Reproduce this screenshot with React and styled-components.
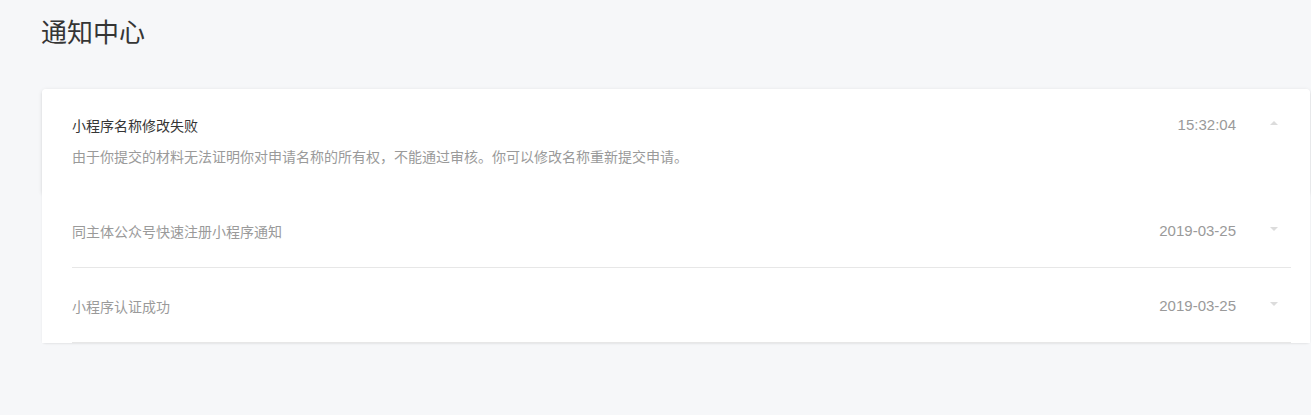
import React from "react";
import styled, { createGlobalStyle } from "styled-components";

const GlobalStyle = createGlobalStyle`
  html, body {
    margin: 0;
    padding: 0;
    background: #f6f7f9;
    font-family: "Noto Sans CJK SC", "Liberation Sans", sans-serif;
  }
`;

const Page = styled.div`
  padding: 12px 0 60px 41px;
  min-height: 415px;
  box-sizing: border-box;
  overflow: hidden;
`;

const Title = styled.h1`
  margin: 0;
  font-size: 26px;
  font-weight: 400;
  line-height: 38px;
  color: #353535;
`;

const Card = styled.div`
  margin: 39px 0 0 1px;
  width: 1268px;
  background: #ffffff;
  border-radius: 4px;
  box-shadow: 0 1px 2px rgba(0, 0, 0, 0.08);
`;

const Item = styled.div`
  position: relative;
  background: #ffffff;
  border-radius: ${({ $expanded }) => ($expanded ? "4px 4px 0 0" : "0")};
  box-shadow: ${({ $expanded }) =>
    $expanded ? "0 1px 4px rgba(0, 0, 0, 0.1)" : "none"};
`;

const Inner = styled.div`
  margin: 0 19px 0 30px;
  padding: ${({ $expanded }) => ($expanded ? "26px 13px 27px 0" : "28px 13px 26px 0")};
  border-bottom: ${({ $expanded }) => ($expanded ? "none" : "1px solid #e7e7e7")};
`;

const Head = styled.div`
  display: flex;
  align-items: center;
  height: 20px;
`;

const ItemTitle = styled.div`
  flex: 1;
  font-size: 14px;
  line-height: 20px;
  color: ${({ $expanded }) => ($expanded ? "#353535" : "#9a9a9a")};
`;

const Time = styled.div`
  font-size: 15px;
  line-height: 20px;
  color: #9a9a9a;
  font-family: "Liberation Sans", "Noto Sans CJK SC", sans-serif;
`;

const Arrow = styled.span`
  width: 0;
  height: 0;
  margin-left: 34px;
  border-left: 4px solid transparent;
  border-right: 4px solid transparent;
  ${({ $up }) =>
    $up
      ? "border-bottom: 4px solid #dcdcdc; margin-top: -4px;"
      : "border-top: 4px solid #dcdcdc; margin-top: -4px;"}
`;

const Desc = styled.div`
  margin-top: 11px;
  font-size: 14px;
  line-height: 20px;
  color: #9a9a9a;
`;

const notices = [
  {
    title: "小程序名称修改失败",
    time: "15:32:04",
    desc: "由于你提交的材料无法证明你对申请名称的所有权，不能通过审核。你可以修改名称重新提交申请。",
    expanded: true,
  },
  { title: "同主体公众号快速注册小程序通知", time: "2019-03-25" },
  { title: "小程序认证成功", time: "2019-03-25" },
];

export default function App() {
  return (
    <>
      <GlobalStyle />
      <Page>
        <Title>通知中心</Title>
        <Card>
          {notices.map((n, i) => (
            <Item key={i} $expanded={n.expanded}>
              <Inner $expanded={n.expanded}>
                <Head>
                  <ItemTitle $expanded={n.expanded}>{n.title}</ItemTitle>
                  <Time>{n.time}</Time>
                  <Arrow $up={n.expanded} />
                </Head>
                {n.expanded && <Desc>{n.desc}</Desc>}
              </Inner>
            </Item>
          ))}
        </Card>
      </Page>
    </>
  );
}
